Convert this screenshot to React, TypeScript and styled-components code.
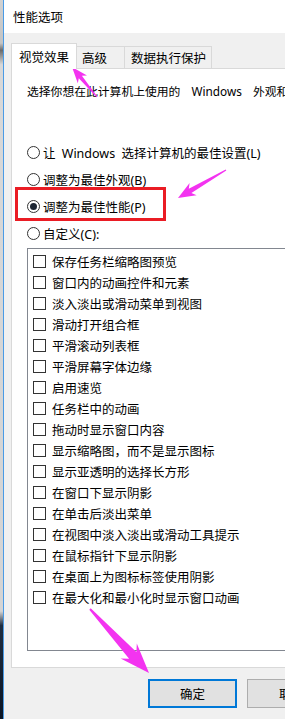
import React from 'react'
import styled, { createGlobalStyle } from 'styled-components'

const font = `"Noto Sans", "Noto Sans CJK SC", sans-serif`

const GlobalStyle = createGlobalStyle`
    html, body {
        margin: 0;
        padding: 0;
        background: #f0f0f0;
        overflow: hidden;
    }
`

const Screen = styled.div`
    position: relative;
    width: 285px;
    height: 719px;
    overflow: hidden;
    display: flex;
    font-family: ${font};
    color: #000;
`

const LeftStrip = styled.div`
    width: 3px;
    flex-shrink: 0;
    background: linear-gradient(
        to bottom,
        #d2d2d2 0,
        #c4c4c4 6%,
        #6b6b6b 7%,
        #d8d8d8 9%,
        #d4d4d4 85%,
        #1e2d40 87%,
        #0b1525 100%
    );
`

const WindowEdge = styled.div`
    width: 1px;
    flex-shrink: 0;
    background: #4a9be6;
`

const Dialog = styled.div`
    width: 430px;
    flex-shrink: 0;
    display: flex;
    flex-direction: column;
`

const TitleBar = styled.div`
    height: 33px;
    background: #fff;
    display: flex;
    align-items: center;
    padding-left: 9px;
    font-size: 12.5px;
`

const Body = styled.div`
    flex: 1;
    background: #f0f0f0;
    padding: 10px 0 0 7px;
`

const TabRow = styled.div`
    display: flex;
    align-items: flex-end;
`

const Tab = styled.div<{ $active?: boolean; $w: number; $pl: number }>`
    box-sizing: border-box;
    width: ${p => p.$w}px;
    height: ${p => (p.$active ? 26 : 22)}px;
    padding-left: ${p => p.$pl}px;
    margin-bottom: ${p => (p.$active ? -1 : 0)}px;
    position: relative;
    z-index: ${p => (p.$active ? 1 : 0)};
    display: flex;
    align-items: center;
    background: ${p => (p.$active ? '#fff' : '#f0f0f0')};
    border: 1px solid #d9d9d9;
    border-bottom: none;
    border-left: ${p => (p.$active ? '1px solid #d9d9d9' : 'none')};
    font-size: 12.5px;
    white-space: nowrap;
`

const Panel = styled.div`
    box-sizing: border-box;
    width: 420px;
    height: 600px;
    background: #fff;
    border: 1px solid #d9d9d9;
    padding: 14px 0 0 15px;
`

const Description = styled.div`
    font-size: 11.8px;
    line-height: 16px;
    height: 16px;
    white-space: nowrap;
    word-spacing: 8px;
`

const RadioGroup = styled.div`
    margin-top: 40px;
`

const RadioRow = styled.div<{ $wide?: boolean }>`
    display: flex;
    align-items: center;
    gap: 3px;
    height: 27px;
    width: ${p => (p.$wide ? '270px' : 'auto')};
    font-size: 12.5px;
    white-space: nowrap;
    word-spacing: 3px;
`

const RadioCircle = styled.span<{ $checked?: boolean }>`
    box-sizing: border-box;
    width: 13px;
    height: 13px;
    border: 1px solid #333;
    border-radius: 50%;
    background: #fff;
    display: grid;
    place-items: center;
    flex-shrink: 0;

    &::after {
        content: '';
        width: 7px;
        height: 7px;
        border-radius: 50%;
        background: ${p => (p.$checked ? '#1d2633' : 'transparent')};
    }
`

const SideBox = styled.span`
    box-sizing: border-box;
    margin-left: auto;
    width: 12px;
    height: 15px;
    border: 1px solid #6d6d6d;
    border-left-width: 2px;
    background: #f4f4f4;
`

const ListBox = styled.div`
    box-sizing: border-box;
    margin-top: 1px;
    width: 400px;
    height: 403px;
    border: 1px solid #828790;
    background: #fff;
    padding-top: 2px;
`

const CheckRow = styled.div`
    display: flex;
    align-items: center;
    gap: 6px;
    height: 21px;
    padding-left: 5px;
    font-size: 12.5px;
    white-space: nowrap;
`

const CheckBox = styled.span`
    box-sizing: border-box;
    width: 13px;
    height: 13px;
    border: 1px solid #333;
    background: #fff;
    flex-shrink: 0;
`

const ButtonRow = styled.div`
    display: flex;
    gap: 10px;
    margin-top: 11px;
    padding-left: 137px;
`

const Button = styled.div<{ $primary?: boolean }>`
    box-sizing: border-box;
    width: 89px;
    height: 29px;
    display: flex;
    align-items: center;
    justify-content: center;
    background: #e1e1e1;
    border: ${p => (p.$primary ? '2px solid #0078d7' : '1px solid #adadad')};
    font-size: 12.5px;
`

const RedFrame = styled.div`
    position: absolute;
    left: 15px;
    top: 187px;
    width: 151px;
    height: 34px;
    box-sizing: border-box;
    border: 3px solid #ea1c24;
`

const Overlay = styled.svg`
    position: absolute;
    left: 0;
    top: 0;
    pointer-events: none;
`

// tapering annotation arrow: tail -> tip
function arrowPoints(x1: number, y1: number, x2: number, y2: number, L: number, W: number, w0: number, w1: number) {
    const dx = x2 - x1
    const dy = y2 - y1
    const len = Math.hypot(dx, dy)
    const ux = dx / len
    const uy = dy / len
    const nx = -uy
    const ny = ux
    const bx = x2 - ux * L
    const by = y2 - uy * L
    const back = L * 0.25
    const pts = [
        [x1 + nx * w0, y1 + ny * w0],
        [bx + nx * w1, by + ny * w1],
        [bx - ux * back + nx * W, by - uy * back + ny * W],
        [x2, y2],
        [bx - ux * back - nx * W, by - uy * back - ny * W],
        [bx - nx * w1, by - ny * w1],
        [x1 - nx * w0, y1 - ny * w0],
    ]
    return pts.map(p => p[0].toFixed(1) + ',' + p[1].toFixed(1)).join(' ')
}

const options = [
    '保存任务栏缩略图预览',
    '窗口内的动画控件和元素',
    '淡入淡出或滑动菜单到视图',
    '滑动打开组合框',
    '平滑滚动列表框',
    '平滑屏幕字体边缘',
    '启用速览',
    '任务栏中的动画',
    '拖动时显示窗口内容',
    '显示缩略图，而不是显示图标',
    '显示亚透明的选择长方形',
    '在窗口下显示阴影',
    '在单击后淡出菜单',
    '在视图中淡入淡出或滑动工具提示',
    '在鼠标指针下显示阴影',
    '在桌面上为图标标签使用阴影',
    '在最大化和最小化时显示窗口动画',
]

export default function App() {
    return (
        <>
            <GlobalStyle />
            <Screen>
                <LeftStrip />
                <WindowEdge />
                <Dialog>
                    <TitleBar>性能选项</TitleBar>
                    <Body>
                        <TabRow>
                            <Tab $active $w={66} $pl={7}>
                                视觉效果
                            </Tab>
                            <Tab $w={48} $pl={5}>
                                高级
                            </Tab>
                            <Tab $w={87} $pl={6}>
                                数据执行保护
                            </Tab>
                        </TabRow>
                        <Panel>
                            <Description>选择你想在此计算机上使用的 Windows 外观和性能设置。</Description>
                            <RadioGroup>
                                <RadioRow $wide>
                                    <RadioCircle />
                                    让 Windows 选择计算机的最佳设置(L)
                                    <SideBox />
                                </RadioRow>
                                <RadioRow>
                                    <RadioCircle />
                                    调整为最佳外观(B)
                                </RadioRow>
                                <RadioRow>
                                    <RadioCircle $checked />
                                    调整为最佳性能(P)
                                </RadioRow>
                                <RadioRow>
                                    <RadioCircle />
                                    自定义(C):
                                </RadioRow>
                            </RadioGroup>
                            <ListBox>
                                {options.map(o => (
                                    <CheckRow key={o}>
                                        <CheckBox />
                                        {o}
                                    </CheckRow>
                                ))}
                            </ListBox>
                        </Panel>
                        <ButtonRow>
                            <Button $primary>确定</Button>
                            <Button>取消</Button>
                        </ButtonRow>
                    </Body>
                </Dialog>
                <RedFrame />
                <Overlay width={285} height={719} viewBox="0 0 285 719">
                    <g fill="#f333f0">
                        <polygon points={arrowPoints(97, 97, 72, 67, 13, 6, 0.5, 2)} />
                        <polygon points={arrowPoints(226, 170, 178, 198, 14, 7, 0.5, 2.5)} />
                        <polygon points={arrowPoints(90, 609, 149, 673, 24, 11, 1, 5)} />
                    </g>
                </Overlay>
            </Screen>
        </>
    )
}
